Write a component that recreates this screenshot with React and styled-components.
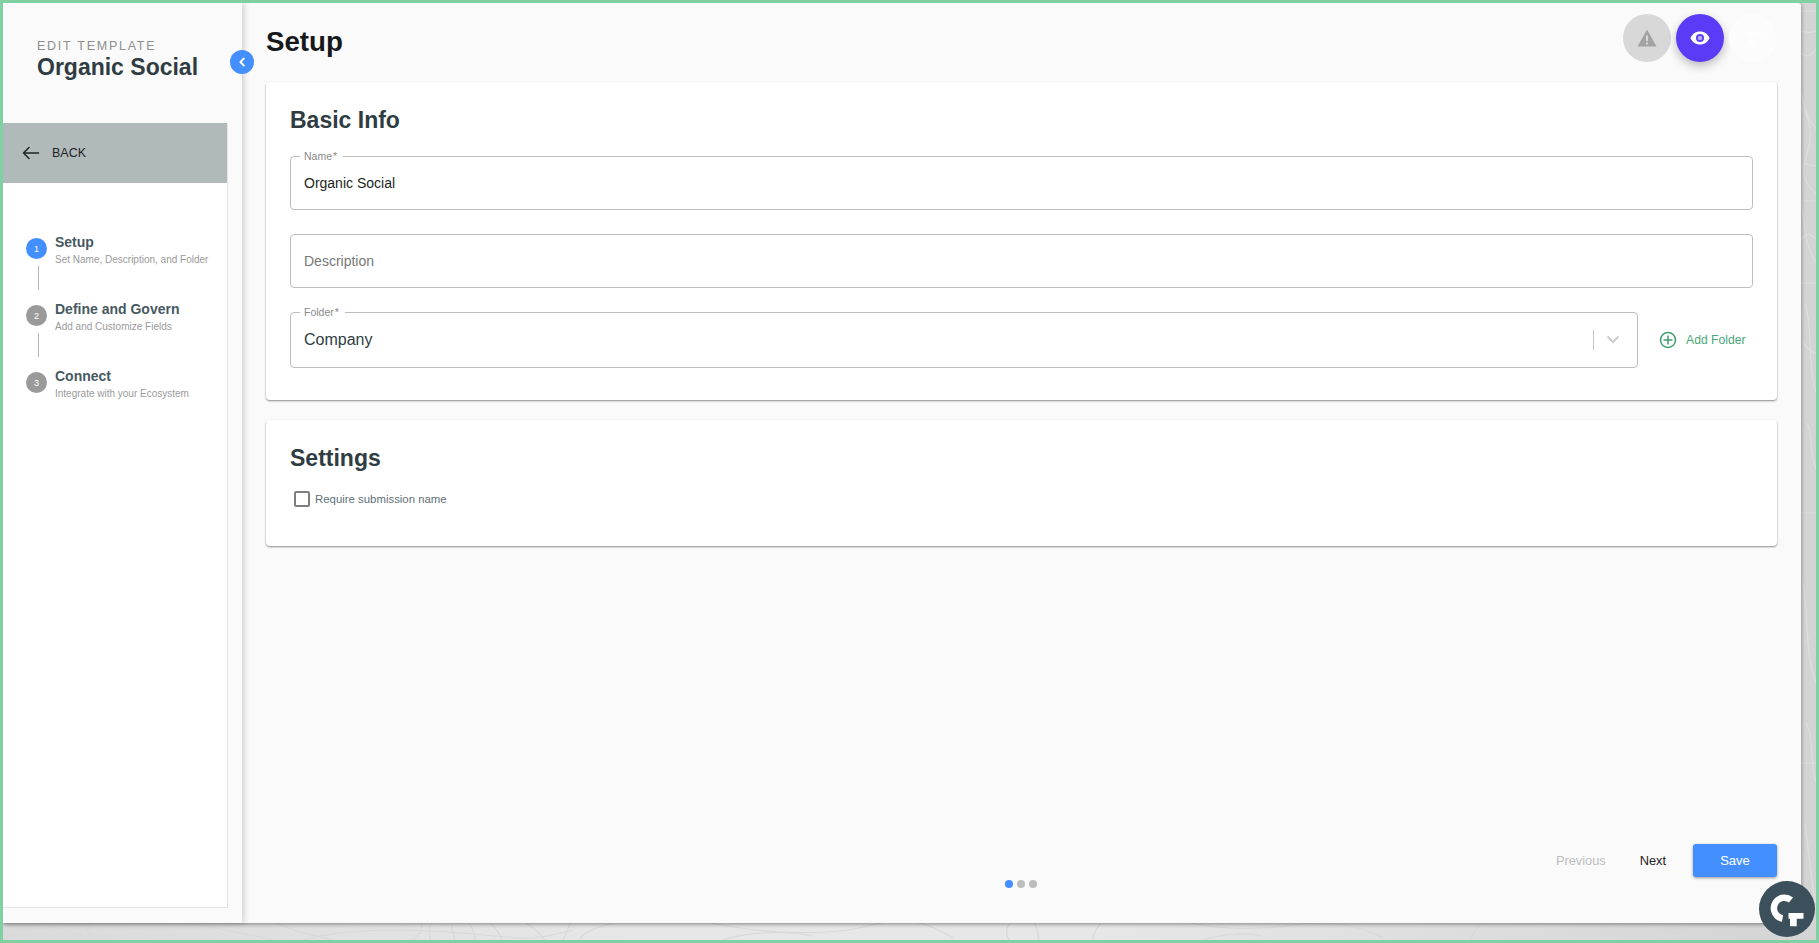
import React from "react";
import styled, { createGlobalStyle } from "styled-components";

const steps = [
  { n: 1, title: "Setup", sub: "Set Name, Description, and Folder", active: true },
  { n: 2, title: "Define and Govern", sub: "Add and Customize Fields" },
  { n: 3, title: "Connect", sub: "Integrate with your Ecosystem" },
];

const App = () => {
  return (
    <Frame>
      <GlobalStyle />
      <Topo viewBox="0 0 1813 937" preserveAspectRatio="none" aria-hidden="true">
        <g fill="none" stroke="#d9d9d9" strokeWidth="1.2">
          <path d="M30 918c30 6 40 14 60 19M90 918c-10 8-6 12 4 19M170 918c40 6 70 12 100 19M300 937c40-12 110-12 170-6s60 6 100-4M270 918c20 10 30 12 60 19M415 918c8 4 2 14-6 19M430 918c-6 8-4 14-2 19M450 918c-2 8 0 12 2 19M465 918c4 6 6 12 8 19M485 918c8 6 12 14 14 19M520 918c10 6 18 14 22 19M560 937c4-8 6-14 8-19M620 918c-30 6-40 12-44 19M700 918c50 12 120 16 160 6s60-8 90 11M720 937c24-8 60-10 90-4M1010 918c-8 6-8 12-4 19M1030 918c6 8 4 10 6 19M1100 918c-6 6-10 12-10 19M1180 918c30 8 70 10 110 4s70 2 90 13M1200 937c20-6 40-8 60-4M1480 918c-6 8-12 14-12 19M1560 918c40 8 90 8 120 17M1620 937c30-6 60-6 90-2" />
        </g>
        <g fill="none" stroke="#dedede" strokeWidth="1.2">
          <path d="M1798 8h15M1798 28c6 2 10 2 15 0M1798 50c6 6 10 2 15-4M1798 90c4 20 10 30 15 36M1798 104c10 10 12 30 5 50s2 30 10 36M1802 160c5 2 6 4 11 2M1798 200c4 16 2 40 15 60M1798 198h15M1798 236c8-8 10-4 15 0M1798 280h15M1802 300c8 24 2 60 11 90M1800 340c6 6 8 10 13 10M1804 420c6 10 2 30 9 46M1798 510h15M1800 580c6 40 2 70 13 100M1803 720c8 14 4 40 10 60M1798 760h15M1802 820c4 30 6 60 11 80" />
        </g>
      </Topo>
      <Panel>
        <Sidebar>
          <SidebarHead>
            <Eyebrow>EDIT TEMPLATE</Eyebrow>
            <TemplateName>Organic Social</TemplateName>
          </SidebarHead>
          <CollapseButton>
            <svg width="12" height="12" viewBox="0 0 12 12" fill="none" stroke="#fff" strokeWidth="1.8" strokeLinecap="round" strokeLinejoin="round">
              <path d="M7.8 2.5 4.4 6l3.4 3.5" />
            </svg>
          </CollapseButton>
          <StepPanel>
            <BackRow>
              <svg width="18" height="14" viewBox="0 0 18 14" fill="none" stroke="#1f2326" strokeWidth="1.5" strokeLinecap="round" strokeLinejoin="round">
                <path d="M16.500 7H1.500M7 1.500 1.500 7 7 12.500" />
              </svg>
              BACK
            </BackRow>
            <StepList>
              {steps.map((s, i) => (
                <StepItem key={s.n}>
                  <StepTrack>
                    <StepDot $active={s.active}>{s.n}</StepDot>
                    {i < steps.length - 1 && <StepLine />}
                  </StepTrack>
                  <StepText>
                    <StepTitle>{s.title}</StepTitle>
                    <StepSub>{s.sub}</StepSub>
                  </StepText>
                </StepItem>
              ))}
            </StepList>
          </StepPanel>
        </Sidebar>
        <Main>
          <TopBar>
            <PageTitle>Setup</PageTitle>
            <TopActions>
              <RoundButton $bg="#d8d8d8">
                <svg width="20" height="18" viewBox="0 0 20 18">
                  <path fill="#a3a3a3" d="M10 .5 19.500 17.500H.5Z" />
                  <path fill="#d8d8d8" d="M9 6.500h2v5.500H9zM9 13.500h2v2H9z" />
                </svg>
              </RoundButton>
              <RoundButton $bg="#5b3bf6" $raised>
                <svg width="20" height="14" viewBox="0 0 20 14">
                  <path fill="#fff" d="M10 .5C5.600.5 2 3.200.4 7 2 10.800 5.600 13.500 10 13.500S18 10.800 19.600 7C18 3.200 14.400.5 10 .5Z" />
                  <circle cx="10" cy="7" r="4" fill="#5b3bf6" />
                  <circle cx="10" cy="7" r="2.300" fill="#fff" opacity="0.55" />
                </svg>
              </RoundButton>
              <RoundButton $bg="#fcfcfc">
                <svg width="18" height="12" viewBox="0 0 18 12" fill="none" stroke="#fff" strokeWidth="1.500">
                  <path d="M1 1h16M3 5.500h11M5 10h5" />
                </svg>
              </RoundButton>
            </TopActions>
          </TopBar>

          <Card>
            <CardTitle>Basic Info</CardTitle>
            <Field>
              <FieldLabel>Name<Required>*</Required></FieldLabel>
              <FieldValue>Organic Social</FieldValue>
            </Field>
            <Field $gap={24.5}>
              <FieldValue $placeholder>Description</FieldValue>
            </Field>
            <FolderRow>
              <SelectField>
                <FieldLabel>Folder<Required>*</Required></FieldLabel>
                <SelectValue>Company</SelectValue>
                <SelectDivider />
                <svg width="14" height="9" viewBox="0 0 14 9" fill="none" stroke="#cccccc" strokeWidth="2">
                  <path d="M1.500 1.500 7 7l5.500-5.500" />
                </svg>
              </SelectField>
              <AddFolder>
                <svg width="18" height="18" viewBox="0 0 18 18" fill="none" stroke="#3f9e6c" strokeWidth="1.500">
                  <circle cx="9" cy="9" r="7.500" />
                  <path d="M9 4.500v9M4.500 9h9" />
                </svg>
                Add Folder
              </AddFolder>
            </FolderRow>
          </Card>

          <SettingsCard>
            <CardTitle>Settings</CardTitle>
            <CheckRow>
              <CheckBox />
              Require submission name
            </CheckRow>
          </SettingsCard>

          <Footer>
            <FooterActions>
              <TextButton $disabled>Previous</TextButton>
              <TextButton>Next</TextButton>
              <SaveButton>Save</SaveButton>
            </FooterActions>
            <Dots>
              <Dot $active />
              <Dot />
              <Dot />
            </Dots>
          </Footer>
        </Main>
      </Panel>
      <LogoBadge>
        <svg width="56" height="56" viewBox="0 0 56 56" fill="none">
          <path stroke="#fff" strokeWidth="6.500" d="M32 19A10.500 10.500 0 1 0 23.500 37.500" />
          <path fill="#fff" d="M29.500 32h15v5.700h-6.800v7.600H31V37.700h-1.500Z" />
        </svg>
      </LogoBadge>
    </Frame>
  );
};
export default App;

const GlobalStyle = createGlobalStyle`
  html, body {
    margin: 0;
    padding: 0;
    overflow: hidden;
  }
  body {
    font-family: "Liberation Sans", Arial, sans-serif;
  }
`;

const Frame = styled.div`
  position: relative;
  box-sizing: border-box;
  width: 1819px;
  height: 943px;
  border: 3px solid #7fd0a2;
  background: linear-gradient(to right, #dadada, #e7e7e7 35%, #e7e7e7 60%, #d4d4d4);
  padding-right: 15px;
  padding-bottom: 17px;
  overflow: hidden;
`;
const Topo = styled.svg`
  position: absolute;
  inset: 0;
  width: 100%;
  height: 100%;
`;
const Panel = styled.div`
  position: relative;
  display: flex;
  height: 100%;
  background: #fafafa;
  border-top-right-radius: 3px;
  box-shadow: 0 1px 4px rgba(0, 0, 0, 0.45);
`;
const Sidebar = styled.aside`
  position: relative;
  flex: 0 0 239px;
  display: flex;
  flex-direction: column;
  background: #fafafa;
  box-shadow: 2px 0 6px rgba(0, 0, 0, 0.18);
  z-index: 1;
`;
const SidebarHead = styled.div`
  height: 120px;
  box-sizing: border-box;
  padding: 36px 0 0 34px;
`;
const Eyebrow = styled.div`
  font-size: 12.5px;
  line-height: 15px;
  letter-spacing: 1.75px;
  color: #8e8e8e;
`;
const TemplateName = styled.div`
  font-size: 23px;
  line-height: 27px;
  font-weight: 700;
  color: #2f3d42;
`;
const CollapseButton = styled.button`
  position: absolute;
  top: 47px;
  right: -12px;
  width: 24px;
  height: 24px;
  padding: 0;
  border: 0;
  border-radius: 50%;
  background: #448fff;
  display: flex;
  align-items: center;
  justify-content: center;
`;
const StepPanel = styled.div`
  flex: 1;
  width: 225px;
  margin-bottom: 15px;
  box-sizing: border-box;
  background: #fff;
  border-right: 1px solid #e6e6e6;
  border-bottom: 1px solid #e6e6e6;
`;
const BackRow = styled.div`
  height: 60px;
  display: flex;
  align-items: center;
  gap: 12px;
  padding-left: 19px;
  background: #b1babb;
  font-size: 12.5px;
  color: #1f2326;
`;
const StepList = styled.div`
  padding: 50px 0 0 23px;
`;
const StepItem = styled.div`
  display: flex;
  gap: 8px;
  height: 67px;
`;
const StepTrack = styled.div`
  display: flex;
  flex-direction: column;
  align-items: center;
  width: 21px;
  flex: none;
  padding-top: 5px;
`;
const StepDot = styled.div`
  width: 21px;
  height: 21px;
  flex: none;
  border-radius: 50%;
  background: ${(p) => (p.$active ? "#448fff" : "#9a9a9a")};
  color: #fff;
  font-size: 9px;
  display: flex;
  align-items: center;
  justify-content: center;
`;
const StepLine = styled.div`
  width: 1px;
  height: 24px;
  margin: 7px 0 0 3px;
  background: #b5b5b5;
`;
const StepText = styled.div`
  min-width: 0;
`;
const StepTitle = styled.div`
  font-size: 14px;
  line-height: 18px;
  font-weight: 700;
  color: #47595f;
  white-space: nowrap;
`;
const StepSub = styled.div`
  margin-top: 2px;
  font-size: 10px;
  line-height: 13px;
  color: #9a9a9a;
  white-space: nowrap;
`;
const Main = styled.main`
  flex: 1;
  min-width: 0;
  display: flex;
  flex-direction: column;
  padding: 0 24px;
`;
const TopBar = styled.div`
  height: 79px;
  flex: none;
  display: flex;
  align-items: flex-start;
  justify-content: space-between;
`;
const PageTitle = styled.h1`
  margin: 22px 0 0;
  font-size: 27.7px;
  line-height: 34px;
  font-weight: 700;
  color: #16191b;
`;
const TopActions = styled.div`
  display: flex;
  gap: 5px;
  margin-top: 11px;
`;
const RoundButton = styled.button`
  width: 48px;
  height: 48px;
  padding: 0;
  border: 0;
  border-radius: 50%;
  background: ${(p) => p.$bg};
  box-shadow: ${(p) => (p.$raised ? "0 4px 10px rgba(0, 0, 0, 0.25)" : "none")};
  display: flex;
  align-items: center;
  justify-content: center;
`;
const Card = styled.section`
  flex: none;
  height: 318px;
  box-sizing: border-box;
  padding: 24px 24px 0;
  background: #fff;
  border-radius: 4px;
  box-shadow: 0 1px 2px rgba(0, 0, 0, 0.45);
`;
const SettingsCard = styled(Card)`
  height: 126px;
  margin-top: 20px;
`;
const CardTitle = styled.h2`
  margin: 0;
  font-size: 23px;
  line-height: 28px;
  font-weight: 700;
  color: #2f3d42;
`;
const Field = styled.div`
  position: relative;
  height: 53.5px;
  box-sizing: border-box;
  margin-top: ${(p) => p.$gap || 22}px;
  padding: 0 13px;
  display: flex;
  align-items: center;
  border: 1px solid #bdbdbd;
  border-radius: 4px;
`;
const FieldLabel = styled.span`
  position: absolute;
  top: -6px;
  left: 9px;
  padding: 0 6px 0 4px;
  background: #fff;
  font-size: 10.5px;
  line-height: 11px;
  color: #8a8a8a;
`;
const Required = styled.span`
  margin-left: 1px;
  font-size: 10.5px;
`;
const FieldValue = styled.span`
  font-size: 14px;
  color: ${(p) => (p.$placeholder ? "#777" : "#1c1f21")};
`;
const FolderRow = styled.div`
  display: flex;
  align-items: center;
  gap: 21px;
  margin-top: 24px;
`;
const SelectField = styled(Field)`
  flex: 1;
  height: 56px;
  margin-top: 0;
  padding-right: 17px;
`;
const SelectValue = styled.span`
  flex: 1;
  font-size: 16px;
  color: #2f3d42;
`;
const SelectDivider = styled.span`
  width: 1px;
  height: 20px;
  margin-right: 12px;
  background: #c4c4c4;
`;
const AddFolder = styled.button`
  width: 94px;
  padding: 0;
  border: 0;
  background: none;
  display: flex;
  align-items: center;
  gap: 9px;
  font-family: inherit;
  font-size: 12.2px;
  color: #4aa878;
  white-space: nowrap;
`;
const CheckRow = styled.label`
  display: flex;
  align-items: center;
  gap: 5px;
  margin: 19px 0 0 4px;
  font-size: 11.4px;
  color: #5d7077;
`;
const CheckBox = styled.span`
  width: 16px;
  height: 16px;
  box-sizing: border-box;
  border: 2px solid #7e7e7e;
  border-radius: 2px;
`;
const Footer = styled.div`
  flex: 1;
  display: flex;
  flex-direction: column;
  justify-content: flex-end;
  padding-bottom: 35px;
`;
const FooterActions = styled.div`
  display: flex;
  align-items: center;
  justify-content: flex-end;
`;
const TextButton = styled.button`
  padding: 0;
  border: 0;
  background: none;
  font-family: inherit;
  font-size: 12.8px;
  margin-right: ${(p) => (p.$disabled ? "34px" : "27px")};
  color: ${(p) => (p.$disabled ? "#bdbdbd" : "#222")};
`;
const SaveButton = styled.button`
  width: 84px;
  height: 33px;
  padding: 0;
  border: 0;
  border-radius: 3px;
  background: #448fff;
  box-shadow: 0 1px 3px rgba(0, 0, 0, 0.4);
  font-family: inherit;
  font-size: 13px;
  color: #fff;
`;
const Dots = styled.div`
  display: flex;
  justify-content: center;
  gap: 4px;
  margin-top: 3px;
  padding-right: 2px;
`;
const Dot = styled.span`
  width: 8px;
  height: 8px;
  border-radius: 50%;
  background: ${(p) => (p.$active ? "#448fff" : "#bdbdbd")};
`;
const LogoBadge = styled.div`
  position: absolute;
  right: 1px;
  bottom: 3px;
  width: 56px;
  height: 56px;
  border-radius: 50%;
  background: #3b505b;
`;
